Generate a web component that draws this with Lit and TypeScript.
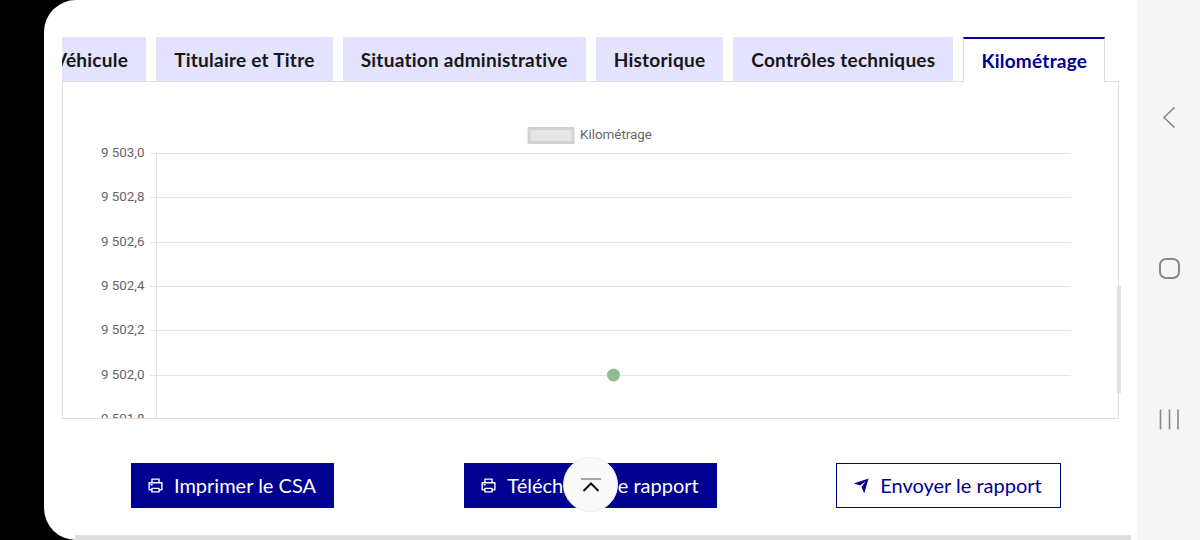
import { LitElement, html, svg, css } from 'lit';
import { customElement } from 'lit/decorators.js';

const TABS = ['Véhicule', 'Titulaire et Titre', 'Situation administrative', 'Historique', 'Contrôles techniques', 'Kilométrage'];
const TICKS = [
  ['9 503,0', 153.5], ['9 502,8', 197.5], ['9 502,6', 242.5], ['9 502,4', 286.5],
  ['9 502,2', 330.5], ['9 502,0', 375.5], ['9 501,8', 419.5],
] as const;

const PRINTER = html`<svg class="icon" viewBox="0 0 24 24"><path d="M6 19H3a1 1 0 0 1-1-1V8a1 1 0 0 1 1-1h3V3a1 1 0 0 1 1-1h10a1 1 0 0 1 1 1v4h3a1 1 0 0 1 1 1v10a1 1 0 0 1-1 1h-3v2a1 1 0 0 1-1 1H7a1 1 0 0 1-1-1v-2zm0-2v-1a1 1 0 0 1 1-1h10a1 1 0 0 1 1 1v1h2V9H4v8h2zM8 4v3h8V4H8zm0 13v3h8v-3H8zm-3-7h3v2H5v-2z"/></svg>`;
const SEND = html`<svg class="icon" viewBox="0 0 24 24"><path d="M1.946 9.315c-.522-.174-.527-.455.01-.634l19.087-6.362c.529-.176.832.12.684.638l-5.454 19.086c-.15.529-.455.547-.679.045L12 14l6-8-8 6-8.054-2.685z"/></svg>`;

@customElement('app-root')
export class AppRoot extends LitElement {
  static styles = css`
    :host {
      display: flex;
      width: 1200px;
      height: 540px;
      overflow: hidden;
      background: #000;
      font-family: Lato, "Noto Sans", sans-serif;
    }
    .screen {
      position: relative;
      flex: 0 0 1093px;
      margin-left: 44px;
      padding-top: 37px;
      box-sizing: border-box;
      background: #fff;
      border-radius: 32px 0 0 32px;
      overflow: hidden;
    }
    .tabs {
      display: flex;
      gap: 10px;
      width: 1057px;
      height: 45px;
      margin-left: 18px;
      overflow: hidden;
      box-shadow: inset 0 -1px 0 #ddd;
    }
    .tab {
      flex: none;
      height: 44px;
      padding: 0 18px;
      box-sizing: border-box;
      display: flex;
      align-items: center;
      background: #e3e3fd;
      color: #161616;
      font-size: 19px;
      font-weight: 700;
      letter-spacing: 0.25px;
      white-space: nowrap;
    }
    .tab:first-child {
      margin-left: -26px;
    }
    .tab.active {
      height: 45px;
      padding: 0 17px;
      background: #fff;
      color: #000091;
      border-top: 2px solid #000091;
      border-left: 1px solid #ddd;
      border-right: 1px solid #ddd;
    }
    .panel {
      width: 1057px;
      height: 337px;
      margin-left: 18px;
      box-sizing: border-box;
      border: 1px solid #ddd;
      border-top: 0;
      overflow: hidden;
    }
    .chart {
      display: block;
      width: 1055px;
      height: 336px;
      font-family: Roboto, sans-serif;
      font-size: 13.4px;
    }
    .grid {
      stroke: #e4e4e4;
      stroke-width: 1;
    }
    .label {
      fill: #666;
      text-anchor: end;
    }
    .legend-box {
      fill: #e6e6e6;
      stroke: #d2d2d2;
      stroke-width: 3;
    }
    .legend-text {
      fill: #666;
    }
    .point {
      fill: #8fbc8f;
    }
    .actions {
      display: grid;
      grid-template-columns: repeat(3, 358px);
      justify-content: center;
      justify-items: center;
      margin-top: 44px;
    }
    .btn {
      display: flex;
      align-items: center;
      gap: 10px;
      height: 45px;
      padding: 0 18px 2px 16px;
      box-sizing: border-box;
      background: #000091;
      color: #fff;
      font-size: 20px;
      font-weight: 400;
      white-space: nowrap;
    }
    .btn.outline {
      background: #fff;
      color: #000091;
      border: 1.5px solid #000091;
    }
    .icon {
      width: 17px;
      height: 17px;
      margin-top: 2px;
      fill: currentColor;
      flex: none;
    }
    .top-btn {
      position: absolute;
      left: 519px;
      top: 457px;
      width: 55px;
      height: 55px;
      box-sizing: border-box;
      display: flex;
      align-items: center;
      justify-content: center;
      border-radius: 50%;
      background: #fafafa;
      border: 1px solid #eee;
    }
    .top-btn svg {
      width: 22px;
      height: 16px;
      fill: none;
    }
    .vscroll {
      position: absolute;
      left: 1073px;
      top: 286px;
      width: 4px;
      height: 107px;
      background: #e2e2e2;
    }
    .hscroll {
      position: absolute;
      left: 31px;
      right: 6px;
      bottom: 0;
      height: 5px;
      background: #dedee0;
    }
    .nav {
      flex: 1;
      background: #f5f5f5;
      padding: 107px 0 110px;
      display: flex;
      flex-direction: column;
      justify-content: space-between;
      align-items: center;
    }
    .nav svg {
      width: 24px;
      height: 21px;
      fill: none;
      stroke: #888;
    }
  `;

  renderChart() {
    return html`
      <svg class="chart" viewBox="63 82 1055 336">
        <rect class="legend-box" x="529" y="128.5" width="44" height="14"></rect>
        <text class="legend-text" x="580" y="139">Kilométrage</text>
        <line class="grid" x1="156.5" x2="156.5" y1="153" y2="420"></line>
        ${TICKS.map(([label, y]) => svg`
          <line class="grid" x1="150" x2="1071" y1=${y} y2=${y}></line>
          <text class="label" x="144.5" y=${y + 3.5}>${label}</text>
        `)}
        <circle class="point" cx="613.5" cy="375" r="6.5"></circle>
      </svg>
    `;
  }

  render() {
    return html`
      <div class="screen">
        <div class="tabs">
          ${TABS.map((t, i) => html`<div class="tab ${i === TABS.length - 1 ? 'active' : ''}">${t}</div>`)}
        </div>
        <div class="panel">${this.renderChart()}</div>
        <div class="actions">
          <div class="btn">${PRINTER}Imprimer le CSA</div>
          <div class="btn">${PRINTER}Télécharger le rapport</div>
          <div class="btn outline">${SEND}Envoyer le rapport</div>
        </div>
        <div class="top-btn">
          <svg viewBox="0 0 22 16">
            <path d="M1 2h20" stroke="#888" stroke-width="1.5"></path>
            <path d="M3.5 14L11 6.5L18.5 14" stroke="#111" stroke-width="2"></path>
          </svg>
        </div>
        <div class="vscroll"></div>
        <div class="hscroll"></div>
      </div>
      <div class="nav">
        <svg viewBox="0 0 24 21"><path d="M17.5 0.5L7 10.5L17.5 20.5" stroke-width="1.6"></path></svg>
        <svg viewBox="0 0 24 21"><rect x="3" y="1" width="19" height="19" rx="6" stroke-width="2"></rect></svg>
        <svg viewBox="0 0 24 21"><path d="M3.5 0.5V20.5M12.5 0.5V20.5M21 0.5V20.5" stroke-width="1.6"></path></svg>
      </div>
    `;
  }
}
